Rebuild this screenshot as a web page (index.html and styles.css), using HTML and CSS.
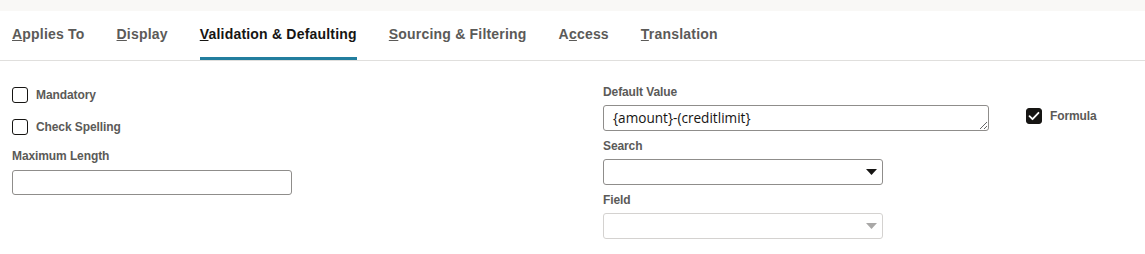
FILE: index.html
```html
<!DOCTYPE html>
<html lang="en">
<head>
  <meta charset="UTF-8">
  <title>Field Settings</title>
  <link rel="stylesheet" href="styles.css">
</head>
<body>
  <!-- Top strip -->
  <div class="top-strip"></div>

  <!-- Tabs -->
  <nav class="tabs">
    <a class="tab"><u>A</u>pplies To</a>
    <a class="tab"><u>D</u>isplay</a>
    <a class="tab active"><u>V</u>alidation &amp; Defaulting</a>
    <a class="tab"><u>S</u>ourcing &amp; Filtering</a>
    <a class="tab">A<u>c</u>cess</a>
    <a class="tab"><u>T</u>ranslation</a>
  </nav>

  <!-- Form -->
  <section class="form">
    <div class="col-left">
      <label class="check-row">
        <span class="checkbox"></span>
        <span class="check-label">Mandatory</span>
      </label>
      <label class="check-row">
        <span class="checkbox"></span>
        <span class="check-label">Check Spelling</span>
      </label>
      <div class="field field-max">
        <div class="field-label">Maximum Length</div>
        <input class="text-input" type="text">
      </div>
    </div>

    <div class="col-right">
      <div class="fields">
        <div class="field">
          <div class="field-label">Default Value</div>
          <textarea class="textarea" rows="1">{amount}-(creditlimit}</textarea>
        </div>
        <div class="field">
          <div class="field-label">Search</div>
          <div class="select">
            <svg class="arrow" width="11" height="6" viewBox="0 0 11 6"><path d="M0 0h11L5.5 6z" fill="#161513"/></svg>
          </div>
        </div>
        <div class="field">
          <div class="field-label">Field</div>
          <div class="select disabled">
            <svg class="arrow" width="11" height="6" viewBox="0 0 11 6"><path d="M0 0h11L5.5 6z" fill="#a9a8a7"/></svg>
          </div>
        </div>
      </div>

      <label class="check-row formula">
        <span class="checkbox checked">
          <svg width="12" height="10" viewBox="0 0 12 10"><path d="M1.5 5.2l3 3L10.5 1.8" fill="none" stroke="#fff" stroke-width="1.8" stroke-linecap="round" stroke-linejoin="round"/></svg>
        </span>
        <span class="check-label">Formula</span>
      </label>
    </div>
  </section>
</body>
</html>
```

FILE: styles.css
```css
:root {
  --text: #161513;
  --muted: #5b5a58;
  --border: #8f8d8b;
  --border-light: #d4d2d0;
  --teal: #227e9e;
}

* {
  margin: 0;
  padding: 0;
  box-sizing: border-box;
  font-family: 'Liberation Sans', Arial, sans-serif;
}

body {
  background-color: white;
  color: var(--text);
}

.top-strip {
  height: 11px;
  background-color: #f9f8f6;
}

.tabs {
  display: flex;
  gap: 32px;
  padding: 0 12px;
  border-bottom: 1px solid #e0dfdd;
}

.tab {
  display: block;
  height: 49px;
  padding-top: 15px;
  font-size: 14px;
  font-weight: 700;
  letter-spacing: 0.2px;
  color: var(--muted);
  border-bottom: 3px solid transparent;
}

.tab.active {
  color: var(--text);
  border-bottom-color: var(--teal);
}

.form {
  display: flex;
  padding: 23px 12px 0;
}

.col-left {
  width: 591px;
  display: flex;
  flex-direction: column;
}

.check-row {
  display: flex;
  align-items: center;
  gap: 8px;
  height: 22px;
  margin-bottom: 10px;
}

.checkbox {
  width: 16px;
  height: 16px;
  border: 1px solid var(--text);
  border-radius: 3px;
  display: flex;
  align-items: center;
  justify-content: center;
}

.checkbox.checked {
  background-color: var(--text);
}

.check-label {
  font-size: 12px;
  font-weight: 700;
  letter-spacing: -0.1px;
  color: var(--muted);
}

.field {
  display: flex;
  flex-direction: column;
  gap: 7px;
  margin-bottom: 7px;
}

.field-max {
  margin-top: 1px;
}

.field-label {
  font-size: 12px;
  font-weight: 700;
  letter-spacing: -0.1px;
  line-height: 14px;
  color: var(--muted);
}

.text-input {
  width: 280px;
  height: 25px;
  border: 1px solid var(--border);
  border-radius: 3px;
}

.col-right {
  display: flex;
  align-items: flex-start;
}

.fields {
  width: 386px;
  padding-top: 1px;
}

.fields .field {
  gap: 6px;
  margin-bottom: 8px;
}

.textarea {
  display: block;
  width: 386px;
  height: 26px;
  padding: 2px 9px;
  border: 1px solid var(--border);
  border-radius: 3px;
  font-family: 'Open Sans', sans-serif;
  font-size: 13.6px;
  line-height: 20px;
  color: var(--text);
  overflow: hidden;
}

.select {
  width: 280px;
  height: 26px;
  border: 1px solid var(--border);
  border-radius: 3px;
  display: flex;
  align-items: center;
  justify-content: flex-end;
  padding-right: 5px;
}

.select.disabled {
  border-color: var(--border-light);
}

.formula {
  margin: 21px 0 0 37px;
}
```
